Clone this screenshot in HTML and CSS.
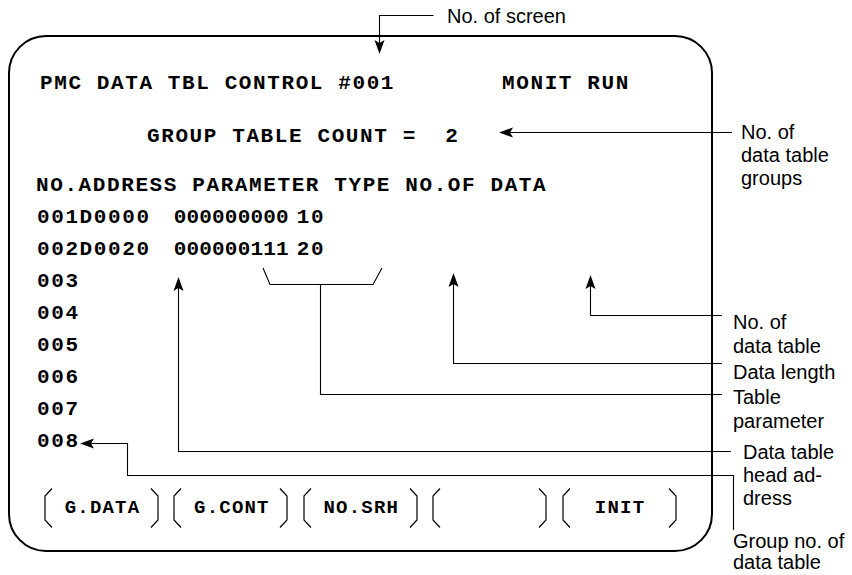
FILE: index.html
```html
<!DOCTYPE html>
<html>
<head>
<meta charset="utf-8">
<link rel="stylesheet" href="styles.css">
</head>
<body>
<div class="page">
  <div class="screen">
    <div class="line l1"><span>PMC DATA TBL CONTROL #001</span><span class="mon">MONIT RUN</span></div>
    <div class="line l2">GROUP TABLE COUNT =  2</div>
    <div class="line hdr">NO.ADDRESS PARAMETER TYPE NO.OF DATA</div>
    <div class="line row"><span class="c1">001D0000</span><span class="c2">000000000</span><span class="c3">10</span></div>
    <div class="line row"><span class="c1">002D0020</span><span class="c2">000000111</span><span class="c3">20</span></div>
    <div class="line row"><span class="c1">003</span></div>
    <div class="line row"><span class="c1">004</span></div>
    <div class="line row"><span class="c1">005</span></div>
    <div class="line row"><span class="c1">006</span></div>
    <div class="line row"><span class="c1">007</span></div>
    <div class="line row"><span class="c1">008</span></div>
    <div class="keys">
      <div class="key"><svg class="br" viewBox="0 0 9 40"><polyline points="8,0.5 1,8 1,32 8,39.5"/></svg><span class="kl">G.DATA</span><svg class="br" viewBox="0 0 9 40"><polyline points="1,0.5 8,8 8,32 1,39.5"/></svg></div>
      <div class="key"><svg class="br" viewBox="0 0 9 40"><polyline points="8,0.5 1,8 1,32 8,39.5"/></svg><span class="kl">G.CONT</span><svg class="br" viewBox="0 0 9 40"><polyline points="1,0.5 8,8 8,32 1,39.5"/></svg></div>
      <div class="key"><svg class="br" viewBox="0 0 9 40"><polyline points="8,0.5 1,8 1,32 8,39.5"/></svg><span class="kl">NO.SRH</span><svg class="br" viewBox="0 0 9 40"><polyline points="1,0.5 8,8 8,32 1,39.5"/></svg></div>
      <div class="key"><svg class="br" viewBox="0 0 9 40"><polyline points="8,0.5 1,8 1,32 8,39.5"/></svg><span class="kl"></span><svg class="br" viewBox="0 0 9 40"><polyline points="1,0.5 8,8 8,32 1,39.5"/></svg></div>
      <div class="key"><svg class="br" viewBox="0 0 9 40"><polyline points="8,0.5 1,8 1,32 8,39.5"/></svg><span class="kl">INIT</span><svg class="br" viewBox="0 0 9 40"><polyline points="1,0.5 8,8 8,32 1,39.5"/></svg></div>
    </div>
  </div>

  <svg class="leaders" width="852" height="575" viewBox="0 0 852 575">
    <g class="ln">
      <polyline points="433.5,15.5 379.5,15.5 379.5,45"/>
      <polyline points="508,132.5 732,132.5"/>
      <polyline points="590.5,285 590.5,315.5 722,315.5"/>
      <polyline points="453.5,283 453.5,363.5 722,363.5"/>
      <polyline points="263,268 270,284.5 373,284.5 382,268"/>
      <polyline points="320.5,284.5 320.5,394.5 722,394.5"/>
      <polyline points="178.5,287 178.5,451.5 731,451.5"/>
      <polyline points="90,443.5 127.5,443.5 127.5,475.5 733.5,475.5 733.5,530"/>
    </g>
    <g class="ah">
      <path d="M379.5,54 L374.5,40 L379.5,43 L384.5,40 Z"/>
      <path d="M499,132.5 L513,127.5 L510,132.5 L513,137.5 Z"/>
      <path d="M590.5,275 L585.5,289 L590.5,286 L595.5,289 Z"/>
      <path d="M453.5,273 L448.5,287 L453.5,284 L458.5,287 Z"/>
      <path d="M178.5,277 L173.5,291 L178.5,288 L183.5,291 Z"/>
      <path d="M80,443.5 L94,438.5 L91,443.5 L94,448.5 Z"/>
    </g>
  </svg>

  <div class="lbl lb-screen">No. of screen</div>
  <div class="lbl lb-groups">No. of<br>data table<br>groups</div>
  <div class="lbl lb-ndt">No. of<br>data table</div>
  <div class="lbl lb-len">Data length</div>
  <div class="lbl lb-tbl">Table<br>parameter</div>
  <div class="lbl lb-head">Data table<br>head ad-<br>dress</div>
  <div class="lbl lb-grp">Group no. of<br>data table</div>
</div>
</body>
</html>
```

FILE: styles.css
```css
html, body {
  margin: 0;
  padding: 0;
  background: #fff;
}

.page {
  position: relative;
  width: 852px;
  height: 575px;
  overflow: hidden;
  color: #000;
}

.screen {
  box-sizing: border-box;
  width: 705px;
  margin: 35px 0 0 8px;
  border: 2px solid #000;
  border-radius: 38px;
  padding: 31px 0 22px 26px;
  display: flex;
  flex-direction: column;
  font-family: "Liberation Mono", "DejaVu Sans Mono", monospace;
  font-weight: bold;
  font-size: 21px;
  letter-spacing: 1.6px;
}

.line {
  height: 32px;
  line-height: 32px;
  white-space: pre;
  display: flex;
}

.l1 { padding-left: 4px; }
.l1 .mon { margin-left: 107px; }

.l2 {
  margin-top: 21px;
  padding-left: 111px;
}

.hdr { margin-top: 17px; }

.row .c1 { padding-left: 1px; }
.row .c2 {
  margin-left: 23px;
  letter-spacing: 0.2px;
}
.row .c3 { margin-left: 8px; }

.keys {
  display: flex;
  gap: 14.4px;
  margin: 30px 0 0 8px;
}

.key {
  width: 115px;
  height: 40px;
  display: flex;
  align-items: center;
  justify-content: space-between;
}

.br {
  width: 9px;
  height: 40px;
  flex: none;
}

.br polyline {
  fill: none;
  stroke: #000;
  stroke-width: 1.2;
}

.kl {
  flex: 1;
  text-align: center;
  font-size: 19px;
  letter-spacing: 1.2px;
  line-height: 40px;
  padding-left: 2px;
}

.leaders {
  position: absolute;
  left: 0;
  top: 0;
  pointer-events: none;
}

.ln polyline {
  fill: none;
  stroke: #000;
  stroke-width: 1.1;
}

.ah path {
  fill: #000;
  stroke: none;
}

.lbl {
  position: absolute;
  font-family: "Liberation Sans", Arial, sans-serif;
  font-size: 20px;
  line-height: 23px;
  white-space: nowrap;
}

.lb-screen { left: 447px; top: 5px; }
.lb-groups { left: 741px; top: 121px; }
.lb-ndt { left: 733px; top: 310px; line-height: 24px; }
.lb-len { left: 733px; top: 361px; }
.lb-tbl { left: 733px; top: 385px; line-height: 24px; }
.lb-head { left: 743px; top: 441px; }
.lb-grp { left: 733px; top: 531px; line-height: 21px; }
```
